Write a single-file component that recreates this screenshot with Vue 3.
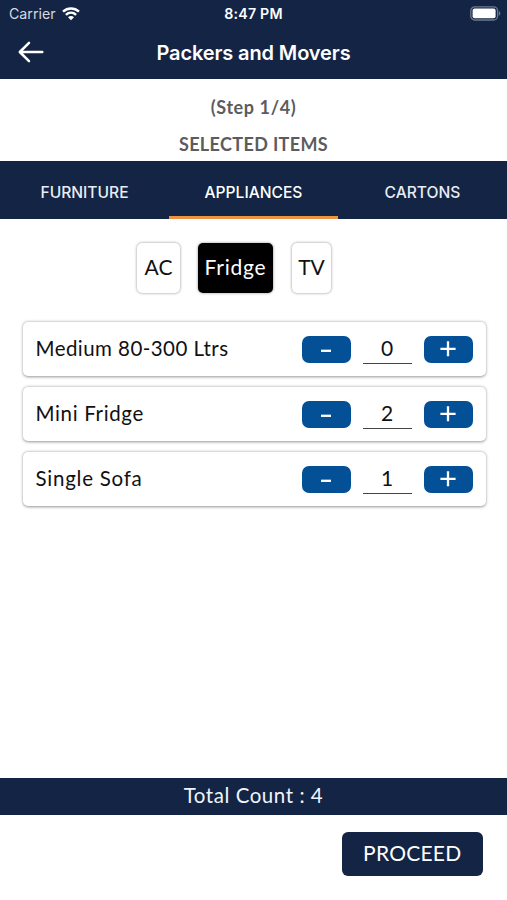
<template>
  <div class="screen">
    <header class="top">
      <div class="status-bar">
        <div class="carrier">
          <span class="carrier-name">Carrier</span>
          <svg class="wifi" viewBox="0 0 18 14" width="18" height="14">
            <path d="M1 4.6C5.7.4 12.3.4 17 4.6" />
            <path d="M3.9 7.8C6.9 5 11.1 5 14.1 7.8" />
            <path class="wifi-dot" d="M6 10.2C7.8 8.7 10.2 8.7 12 10.2L9 13.3Z" />
          </svg>
        </div>
        <span class="time">8:47 PM</span>
        <svg class="battery" viewBox="0 0 31 15" width="31" height="15">
          <rect class="battery-shell" x="0.8" y="0.8" width="26.8" height="13.2" rx="4" />
          <rect class="battery-level" x="2.6" y="2.6" width="23" height="9.6" rx="2" />
          <path class="battery-tip" d="M28.8 5v4.8c2-.7 2-4.1 0-4.8z" />
        </svg>
      </div>
      <div class="nav">
        <svg class="back" viewBox="0 0 26 22" width="26" height="22">
          <path d="M24.3 11H2M11 1.8L1.8 11L11 20.2" />
        </svg>
        <h1 class="title">Packers and Movers</h1>
      </div>
    </header>

    <section class="step">
      <p class="step-count">(Step 1/4)</p>
      <p class="step-name">SELECTED ITEMS</p>
    </section>

    <nav class="tabs">
      <button
        v-for="tab in tabs"
        :key="tab"
        class="tab"
        :class="{ active: tab === activeTab }"
        @click="activeTab = tab"
      >
        {{ tab }}
      </button>
    </nav>

    <div class="chips">
      <button
        v-for="chip in chips"
        :key="chip"
        class="chip"
        :class="[chip.toLowerCase(), { selected: chip === activeChip }]"
        @click="activeChip = chip"
      >
        {{ chip }}
      </button>
    </div>

    <ul class="items">
      <li v-for="item in items" :key="item.key" class="item">
        <span class="item-name" :class="item.key">{{ item.name }}</span>
        <button class="qty-btn" aria-label="Decrease" @click="decrease(item)">
          <svg viewBox="0 0 16 16" width="16" height="16"><path d="M3 9.8h10" /></svg>
        </button>
        <span class="qty">{{ item.count }}</span>
        <button class="qty-btn" aria-label="Increase" @click="item.count++">
          <svg viewBox="0 0 16 16" width="16" height="16"><path d="M0.4 7.8h15.2M8 0.3v15" /></svg>
        </button>
      </li>
    </ul>

    <div class="total">Total Count : {{ total }}</div>
    <footer class="footer">
      <button class="proceed">PROCEED</button>
    </footer>
  </div>
</template>

<script setup>
import { computed, ref } from 'vue'

const tabs = ['FURNITURE', 'APPLIANCES', 'CARTONS']
const activeTab = ref('APPLIANCES')

const chips = ['AC', 'Fridge', 'TV']
const activeChip = ref('Fridge')

const items = ref([
  { key: 'medium', name: 'Medium 80-300 Ltrs', count: 0 },
  { key: 'mini', name: 'Mini Fridge', count: 2 },
  { key: 'sofa', name: 'Single Sofa', count: 1 }
])

// items already picked under the other tabs
const otherItems = 1

const total = computed(() => items.value.reduce((sum, item) => sum + item.count, otherItems))

function decrease(item) {
  if (item.count > 0) item.count--
}
</script>

<style>
body {
  background: #fff;
}
</style>

<style scoped>
.screen {
  display: flex;
  flex-direction: column;
  height: 900px;
  background: #fff;
  color: #111;
  font-family: Lato, sans-serif;
}

button {
  padding: 0;
  border: 0;
  font: inherit;
  color: inherit;
  background: none;
}

.top {
  height: 79px;
  background: #142444;
  color: #fff;
  font-family: Inter, sans-serif;
}

.status-bar {
  display: grid;
  grid-template-columns: 1fr auto 1fr;
  align-items: center;
  height: 27px;
  padding: 0 6px 0 9px;
}

.carrier {
  display: flex;
  align-items: center;
  gap: 6px;
}

.carrier-name {
  font-size: 14.2px;
  color: #d5dae3;
}

.wifi {
  fill: none;
  stroke: #fff;
  stroke-width: 2.5;
}

.wifi .wifi-dot {
  fill: #fff;
  stroke: none;
}

.time {
  padding-right: 3px;
  font-size: 14.2px;
  font-weight: 600;
  letter-spacing: 0.2px;
}

.battery {
  justify-self: end;
}

.battery-shell {
  fill: none;
  stroke: #6c7890;
  stroke-width: 1.3;
}

.battery-level {
  fill: #fff;
}

.battery-tip {
  fill: #6c7890;
}

.nav {
  display: grid;
  grid-template-columns: 1fr auto 1fr;
  align-items: center;
  height: 50px;
  padding: 0 18px;
}

.back {
  fill: none;
  stroke: #fff;
  stroke-width: 2.5;
  stroke-linecap: round;
  stroke-linejoin: round;
}

.title {
  margin: 0;
  padding-top: 1px;
  font-size: 20px;
  font-weight: 600;
  letter-spacing: -0.12px;
}

.step {
  height: 82px;
  padding-top: 10px;
  box-sizing: border-box;
  text-align: center;
  font-size: 18px;
  font-weight: 700;
  color: #5c5c5c;
}

.step p {
  height: 36px;
  margin: 0;
  line-height: 37px;
}

.step .step-count {
  letter-spacing: 0.6px;
}

.step .step-name {
  line-height: 39px;
  letter-spacing: 0.36px;
}

.tabs {
  display: grid;
  grid-template-columns: repeat(3, 1fr);
  height: 58px;
  background: #142444;
  color: #e8edf5;
  font-family: Inter, sans-serif;
  font-size: 15.6px;
  font-weight: 500;
}

.tab {
  padding-top: 7px;
  border-bottom: 3px solid transparent;
}

.tab.active {
  border-color: #ea9343;
  color: #fff;
}

.chips {
  display: flex;
  gap: 18px;
  padding: 24px 0 0 137px;
}

.chip {
  height: 50px;
  width: 43px;
  padding-bottom: 4px;
  border-radius: 5px;
  background: #fff;
  box-shadow: 0 0 3px rgba(0, 0, 0, 0.45);
  font-size: 21px;
}

.chip.fridge {
  width: 75px;
  letter-spacing: 0.75px;
}

.chip.tv {
  width: 39px;
  margin-left: 1px;
}

.chip.selected {
  background: #000;
  color: #fff;
}

.items {
  display: flex;
  flex-direction: column;
  gap: 11.2px;
  flex: 1;
  margin: 0;
  padding: 29px 21.5px 0 22.5px;
  list-style: none;
}

.item {
  display: flex;
  align-items: center;
  height: 54px;
  padding: 0 13px;
  border-radius: 5px;
  box-shadow: 0 0.5px 3px rgba(0, 0, 0, 0.42);
}

.item-name {
  flex: 1;
  padding-bottom: 2px;
  font-size: 20.5px;
}

.item-name.medium {
  letter-spacing: 0.44px;
}

.item-name.mini {
  letter-spacing: 0.65px;
}

.item-name.sofa {
  letter-spacing: 0.75px;
}

.qty-btn {
  display: flex;
  align-items: center;
  justify-content: center;
  width: 49px;
  height: 27px;
  border-radius: 7px;
  background: #035096;
}

.qty-btn svg {
  fill: none;
  stroke: #fff;
  stroke-width: 2.3;
}

.qty {
  width: 49px;
  height: 27px;
  margin: 2px 12px 0;
  border-bottom: 1.5px solid #444;
  text-align: center;
  font-size: 21px;
  line-height: 24px;
}

.total {
  height: 37px;
  line-height: 35px;
  background: #142444;
  color: #f0f4fa;
  text-align: center;
  font-size: 20.5px;
  letter-spacing: 0.55px;
}

.footer {
  display: flex;
  justify-content: flex-end;
  height: 85px;
  padding: 17px 24.5px 0 0;
  box-sizing: border-box;
}

.proceed {
  width: 140.5px;
  height: 44px;
  padding-bottom: 4px;
  border-radius: 6px;
  background: #142444;
  color: #fff;
  font-size: 21px;
  letter-spacing: 0.25px;
}
</style>
